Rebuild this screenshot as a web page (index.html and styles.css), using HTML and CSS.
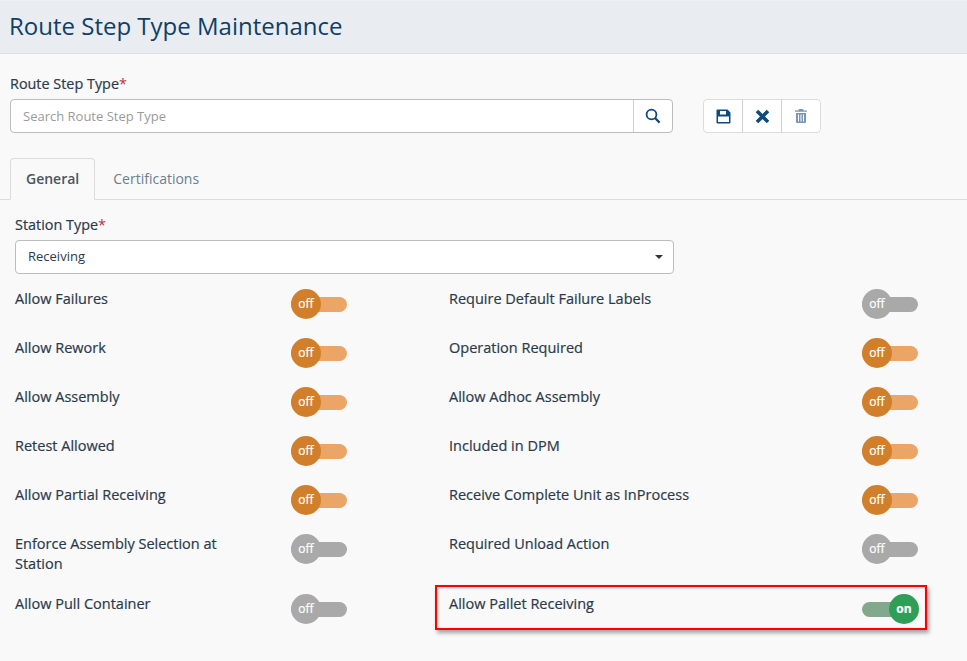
FILE: index.html
```html
<!DOCTYPE html>
<html lang="en">
<head>
    <meta charset="UTF-8">
    <title>Route Step Type Maintenance</title>
    <link rel="stylesheet" href="styles.css">
</head>
<body>
    <header class="page-header">
        <h1>Route Step Type Maintenance</h1>
    </header>

    <section class="search-area">
        <label class="field-label">Route Step Type<span class="req">*</span></label>
        <div class="search-row">
            <div class="search-group">
                <input class="search-input" type="text" placeholder="Search Route Step Type">
                <button class="icon-btn search-btn">
                    <svg width="16" height="16" viewBox="0 0 16 16"><circle cx="6.5" cy="6.5" r="4.9" fill="none" stroke="#0f4a7c" stroke-width="1.8"/><path d="M10 10l4.6 4.6" stroke="#0f4a7c" stroke-width="2.2" fill="none"/></svg>
                </button>
            </div>
            <div class="action-group">
                <button class="icon-btn">
                    <svg width="15" height="15" viewBox="0 0 15 15"><path fill-rule="evenodd" fill="#0f4a7c" d="M1.5 .5h10l3 3v10a1 1 0 0 1-1 1h-12a1 1 0 0 1-1-1v-12a1 1 0 0 1 1-1zM4 2v3.500h6V2zM2 7.500V13h11V7.500z"/></svg>
                </button>
                <button class="icon-btn">
                    <svg width="15" height="15" viewBox="0 0 15 15"><path d="M2 2l11 11M13 2L2 13" stroke="#0f4a7c" stroke-width="3.600" fill="none"/></svg>
                </button>
                <button class="icon-btn">
                    <svg width="12" height="14" viewBox="0 0 12 14"><path fill="#7b95b5" fill-rule="evenodd" d="M4 0h4l.7 1.500H12v1.300H0V1.500h3.300zM1 4h10v9a1 1 0 0 1-1 1H2a1 1 0 0 1-1-1zM3 5.500V12.500h1V5.500zM5.500 5.500V12.500h1V5.500zM8 5.500V12.500h1V5.500z"/></svg>
                </button>
            </div>
        </div>
    </section>

    <nav class="tabs">
        <a class="tab active">General</a>
        <a class="tab">Certifications</a>
    </nav>

    <main class="tab-body">
        <label class="field-label">Station Type<span class="req">*</span></label>
        <div class="select-box">
            <span>Receiving</span>
            <span class="caret"></span>
        </div>

        <div class="toggle-grid">
            <div class="row"><span class="row-label">Allow Failures</span><span class="toggle orange"><i>off</i></span></div>
            <div class="row"><span class="row-label">Require Default Failure Labels</span><span class="toggle grey"><i>off</i></span></div>

            <div class="row"><span class="row-label">Allow Rework</span><span class="toggle orange"><i>off</i></span></div>
            <div class="row"><span class="row-label">Operation Required</span><span class="toggle orange"><i>off</i></span></div>

            <div class="row"><span class="row-label">Allow Assembly</span><span class="toggle orange"><i>off</i></span></div>
            <div class="row"><span class="row-label">Allow Adhoc Assembly</span><span class="toggle orange"><i>off</i></span></div>

            <div class="row"><span class="row-label">Retest Allowed</span><span class="toggle orange"><i>off</i></span></div>
            <div class="row"><span class="row-label">Included in DPM</span><span class="toggle orange"><i>off</i></span></div>

            <div class="row"><span class="row-label">Allow Partial Receiving</span><span class="toggle orange"><i>off</i></span></div>
            <div class="row"><span class="row-label">Receive Complete Unit as InProcess</span><span class="toggle orange"><i>off</i></span></div>

            <div class="row"><span class="row-label">Enforce Assembly Selection at Station</span><span class="toggle grey"><i>off</i></span></div>
            <div class="row"><span class="row-label">Required Unload Action</span><span class="toggle grey"><i>off</i></span></div>

            <div class="row"><span class="row-label">Allow Pull Container</span><span class="toggle grey"><i>off</i></span></div>
            <div class="row highlighted">
                <span class="row-label">Allow Pallet Receiving</span><span class="toggle green"><i>on</i></span>
                <div class="red-box"></div>
            </div>
        </div>
    </main>
</body>
</html>
```

FILE: styles.css
```css
/* page styles */
* {
    box-sizing: border-box;
}

html, body {
    height: 100%;
}

body {
    margin: 0;
    background-color: #f9f9f9;
    color: #2b3a4a;
    font-family: "Open Sans", "Noto Sans", sans-serif;
    font-size: 14px;
    overflow: hidden;
}

.page-header {
    height: 54px;
    padding: 8px 9px 0;
    background-color: #e9edf2;
    border-top: 1px solid #eef0f3;
    border-bottom: 1px solid #dcdfe3;
}

.page-header h1 {
    margin: 0;
    font-size: 24px;
    font-weight: 400;
    line-height: 33px;
    color: #0f3f68;
}

/* search and action buttons */
.search-area {
    padding: 20px 10px 0;
}

.field-label {
    display: block;
    font-size: 14.4px;
    font-weight: 400;
    line-height: 20px;
    -webkit-text-stroke: 0.2px #2b3a4a;
}

.req {
    color: #b8323e;
    -webkit-text-stroke: 0;
}

.search-row {
    display: flex;
    margin-top: 5px;
}

.search-group {
    display: flex;
    width: 663px;
    height: 34px;
    border: 1px solid #bdbdbd;
    border-radius: 4px;
    background-color: #fff;
}

.search-input {
    flex: 1;
    min-width: 0;
    padding: 0 12px;
    border: none;
    background: none;
    border-radius: 4px;
    font-family: inherit;
    font-size: 13px;
    color: #2b3a4a;
    outline: none;
}

.search-input::placeholder {
    color: #9a9a9a;
    opacity: 1;
}

.icon-btn {
    display: flex;
    align-items: center;
    justify-content: center;
    width: 39px;
    padding: 0;
    border: none;
    border-left: 1px solid #cfcfcf;
    background: none;
}

.action-group {
    display: flex;
    width: 118px;
    height: 34px;
    margin-left: 30px;
    border: 1px solid #dcdcdc;
    border-radius: 4px;
    background-color: #fff;
}

.action-group .icon-btn:first-child {
    width: 38px;
    border-left: none;
}

.action-group .icon-btn:last-child {
    flex: 1;
}

/* tabs */
.tabs {
    display: flex;
    height: 42px;
    margin-top: 25px;
    padding-left: 10px;
    border-bottom: 1px solid #dcdcdc;
}

.tab {
    height: 42px;
    padding: 0 17px;
    line-height: 40px;
    font-size: 14px;
    color: #6c7f8e;
    border: 1px solid transparent;
}

.tab.active {
    padding: 0 15px;
    color: #4a5560;
    font-weight: 600;
    background-color: #f9f9f9;
    border-color: #dcdcdc;
    border-bottom-color: #f9f9f9;
    border-radius: 4px 4px 0 0;
}

/* general tab */
.tab-body {
    padding: 15px 15px 0;
}

.select-box {
    display: flex;
    align-items: center;
    justify-content: space-between;
    width: 659px;
    height: 34px;
    margin-top: 5px;
    padding: 0 12px 2px;
    background-color: #fff;
    border: 1px solid #bdbdbd;
    border-radius: 4px;
    font-size: 13px;
}

.caret {
    width: 0;
    height: 0;
    margin-right: -2px;
    margin-top: 2px;
    border-left: 4px solid transparent;
    border-right: 4px solid transparent;
    border-top: 4px solid #333;
}

.toggle-grid {
    display: grid;
    grid-template-columns: 332px 469px;
    column-gap: 102px;
    margin-top: 15px;
}

.row {
    position: relative;
    display: flex;
    justify-content: space-between;
    min-height: 49px;
    padding-bottom: 20px;
}

.row-label {
    width: 230px;
    font-size: 14.5px;
    line-height: 20px;
    -webkit-text-stroke: 0.2px #2b3a4a;
}

.row:nth-child(even) .row-label {
    width: 400px;
}

/* switches */
.toggle {
    position: relative;
    display: block;
    flex: none;
    width: 56px;
    height: 15px;
    margin-top: 8px;
    border-radius: 8px;
}

.toggle i {
    position: absolute;
    top: -8px;
    left: 0;
    width: 30px;
    height: 30px;
    border-radius: 50%;
    font-size: 12px;
    font-style: normal;
    line-height: 30px;
    text-align: center;
    color: #fff;
    -webkit-text-stroke: 0.2px #fff;
}

.toggle.orange {
    background-color: #eba567;
}

.toggle.orange i {
    background-color: #d17f2b;
}

.toggle.grey {
    background-color: #a9a9a9;
}

.toggle.grey i {
    background-color: #a9a9a9;
}

.toggle.green {
    background-color: #82a98c;
}

.toggle.green i {
    left: 27px;
    font-weight: 700;
    background-color: #2f9e56;
}

.red-box {
    position: absolute;
    top: -9px;
    left: -14px;
    width: 492px;
    height: 45px;
    border: 2px solid #f00;
    box-shadow: 2px 3px 4px rgba(0, 0, 0, 0.35), inset 1px 1px 3px rgba(0, 0, 0, 0.2);
    pointer-events: none;
}
```
